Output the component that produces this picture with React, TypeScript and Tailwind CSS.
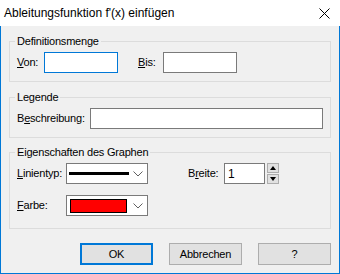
import React from "react";

function Chevron() {
  return (
    <svg width="10" height="6" viewBox="0 0 10 6" className="ml-auto mr-[4px]">
      <path d="M0.5 0.5 L5 5 L9.5 0.5" fill="none" stroke="#606060" strokeWidth="1" />
    </svg>
  );
}

export default function App() {
  return (
    <div className="w-[340px] h-[274px] flex flex-col font-['Liberation_Sans',Arial,sans-serif] text-black">
      <div className="h-[26px] bg-white flex items-center justify-between pl-[4px] pr-[10px] text-[12px]">
        <span>Ableitungsfunktion f'(x) einfügen</span>
        <svg width="11" height="11" viewBox="0 0 11 11">
          <path d="M0.5 0.5 L10.5 10.5 M10.5 0.5 L0.5 10.5" stroke="#000" strokeWidth="1" />
        </svg>
      </div>
      <div className="flex-1 bg-[#f0f0f0] border-x border-b border-[#0078d7] px-[8px] pt-[8px] text-[11px] tracking-[-0.2px]">
        <fieldset className="border border-[#dcdcdc] px-[7px] pb-[8px]">
          <legend className="-ml-[2px] px-[2px] leading-[14px]">Definitionsmenge</legend>
          <div className="mt-[4px] flex items-center h-[21px]">
            <label className="w-[27px]">
              <span className="underline">V</span>on:
            </label>
            <input readOnly className="w-[74px] h-[21px] border border-[#0078d7] bg-white outline-none" />
            <label className="ml-[20px] w-[25px]">
              <span className="underline">B</span>is:
            </label>
            <input readOnly className="w-[74px] h-[21px] border border-[#7a7a7a] bg-white outline-none" />
          </div>
        </fieldset>

        <fieldset className="mt-[8px] border border-[#dcdcdc] px-[7px] pb-[8px]">
          <legend className="-ml-[2px] px-[2px] leading-[14px]">Legende</legend>
          <div className="mt-[4px] flex items-center h-[21px]">
            <label className="w-[73px]">
              B<span className="underline">e</span>schreibung:
            </label>
            <input readOnly className="w-[233px] h-[21px] border border-[#7a7a7a] bg-white outline-none" />
          </div>
        </fieldset>

        <fieldset className="mt-[7px] border border-[#dcdcdc] px-[7px] pb-[12px]">
          <legend className="-ml-[2px] px-[2px] leading-[14px]">Eigenschaften des Graphen</legend>
          <div className="mt-[4px] flex items-center h-[21px]">
            <label className="w-[49px]">
              <span className="underline">L</span>inientyp:
            </label>
            <div className="w-[82px] h-[21px] border border-[#7a7a7a] bg-white flex items-center pl-[2px]">
              <div className="w-[60px] h-[3px] bg-black" />
              <Chevron />
            </div>
            <label className="ml-[40px] w-[36px]">
              B<span className="underline">r</span>eite:
            </label>
            <div className="w-[41px] h-[21px] border border-[#7a7a7a] bg-white flex items-center pl-[3px] text-[12px]">
              1
            </div>
            <div className="ml-[2px] w-[12px] h-[21px] flex flex-col gap-[1px]">
              <div className="flex-1 border border-[#adadad] bg-[#e1e1e1] flex items-center justify-center">
                <svg width="6" height="4" viewBox="0 0 6 4"><path d="M0 4 L3 0 L6 4 Z" fill="#000" /></svg>
              </div>
              <div className="flex-1 border border-[#adadad] bg-[#e1e1e1] flex items-center justify-center">
                <svg width="6" height="4" viewBox="0 0 6 4"><path d="M0 0 L3 4 L6 0 Z" fill="#000" /></svg>
              </div>
            </div>
          </div>
          <div className="mt-[11px] flex items-center h-[21px]">
            <label className="w-[49px]">
              <span className="underline">F</span>arbe:
            </label>
            <div className="w-[82px] h-[21px] border border-[#7a7a7a] bg-white flex items-center pl-[3px]">
              <div className="w-[57px] h-[14px] bg-[#ff0000] border border-black" />
              <Chevron />
            </div>
          </div>
        </fieldset>

        <div className="mt-[14px] flex justify-end gap-[16px]">
          <button className="w-[73px] h-[22px] border-2 border-[#0078d7] bg-[#e1e1e1] text-[11px]">OK</button>
          <button className="w-[73px] h-[22px] border border-[#adadad] bg-[#e1e1e1] text-[11px]">Abbrechen</button>
          <button className="w-[73px] h-[22px] border border-[#adadad] bg-[#e1e1e1] text-[11px]">?</button>
        </div>
      </div>
    </div>
  );
}
